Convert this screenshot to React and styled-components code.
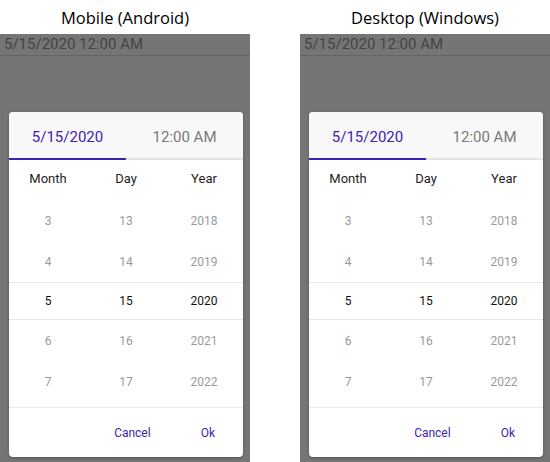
import React from 'react';
import styled, { createGlobalStyle } from 'styled-components';

const Global = createGlobalStyle`
  html, body { margin: 0; padding: 0; background: #fff; }
  body { width: 550px; height: 462px; overflow: hidden; }
`;

const Page = styled.div`
  display: flex;
  gap: 50px;
  width: 550px;
  height: 462px;
`;

const Column = styled.div`
  display: flex;
  flex-direction: column;
  width: 250px;
`;

const Title = styled.div`
  height: 34px;
  display: flex;
  align-items: center;
  justify-content: center;
  font-family: "Open Sans", sans-serif;
  font-size: 16.5px;
  color: #000;
`;

const Backdrop = styled.div`
  flex: 1;
  background: #757575;
  display: flex;
  flex-direction: column;
  min-height: 0;
`;

const Field = styled.div`
  height: 21px;
  line-height: 21px;
  padding-left: 4px;
  border-bottom: 1px solid #646464;
  font-family: Roboto, sans-serif;
  font-size: 15px;
  color: #444;
`;

const Dialog = styled.div`
  margin: 56px 0 0 9px;
  width: 234px;
  height: 345px;
  background: #fff;
  border-radius: 4px;
  overflow: hidden;
  box-shadow: 0 1px 3px rgba(0, 0, 0, 0.3);
  display: flex;
  flex-direction: column;
  font-family: Roboto, sans-serif;
`;

const Tabs = styled.div`
  display: flex;
  height: 46px;
  background: #f8f8f8;
`;

const Tab = styled.div`
  flex: 1;
  display: flex;
  align-items: center;
  justify-content: center;
  padding-top: 4px;
  box-sizing: border-box;
  font-size: 15px;
  color: ${p => (p.active ? '#3f22b4' : '#7a7a7a')};
`;

const Track = styled.div`
  height: 2px;
  background: #e4e4e4;
  display: flex;
`;

const Indicator = styled.div`
  width: 50%;
  background: #3f22b4;
`;

const Grid = styled.div`
  display: grid;
  grid-template-columns: repeat(3, 1fr);
  align-items: center;
  justify-items: center;
  height: ${p => p.h}px;
  box-sizing: border-box;
  ${p => p.selected && 'border-top: 1px solid #e6e6e6; border-bottom: 1px solid #e6e6e6;'}
`;

const Head = styled.span`
  font-size: 13px;
  color: #1e1e1e;
`;

const List = styled.div`
  padding: 4px 0 5px;
  border-bottom: 1px solid #ececec;
`;

const Cell = styled.span`
  font-size: 12px;
  color: ${p => (p.selected ? '#111' : '#9a9a9a')};
`;

const Footer = styled.div`
  flex: 1;
  display: flex;
  align-items: center;
  justify-content: flex-end;
  gap: 34px;
  padding: 1px 20px 0 0;
`;

const Button = styled.span`
  padding: 0 8px;
  font-size: 12px;
  color: #3f22b4;
`;

const rows = [
  { m: 3, d: 13, y: 2018, h: 41 },
  { m: 4, d: 14, y: 2019, h: 41 },
  { m: 5, d: 15, y: 2020, h: 38, selected: true },
  { m: 6, d: 16, y: 2021, h: 41 },
  { m: 7, d: 17, y: 2022, h: 41 },
];

function Picker({ title }) {
  return (
    <Column>
      <Title>{title}</Title>
      <Backdrop>
        <Field>5/15/2020 12:00 AM</Field>
        <Dialog>
          <Tabs>
            <Tab active>5/15/2020</Tab>
            <Tab>12:00 AM</Tab>
          </Tabs>
          <Track><Indicator /></Track>
          <Grid h={36}>
            <Head>Month</Head>
            <Head>Day</Head>
            <Head>Year</Head>
          </Grid>
          <List>
            {rows.map(r => (
              <Grid key={r.m} h={r.h} selected={r.selected}>
                <Cell selected={r.selected}>{r.m}</Cell>
                <Cell selected={r.selected}>{r.d}</Cell>
                <Cell selected={r.selected}>{r.y}</Cell>
              </Grid>
            ))}
          </List>
          <Footer>
            <Button>Cancel</Button>
            <Button>Ok</Button>
          </Footer>
        </Dialog>
      </Backdrop>
    </Column>
  );
}

export default function App() {
  return (
    <>
      <Global />
      <Page>
        <Picker title="Mobile (Android)" />
        <Picker title="Desktop (Windows)" />
      </Page>
    </>
  );
}
